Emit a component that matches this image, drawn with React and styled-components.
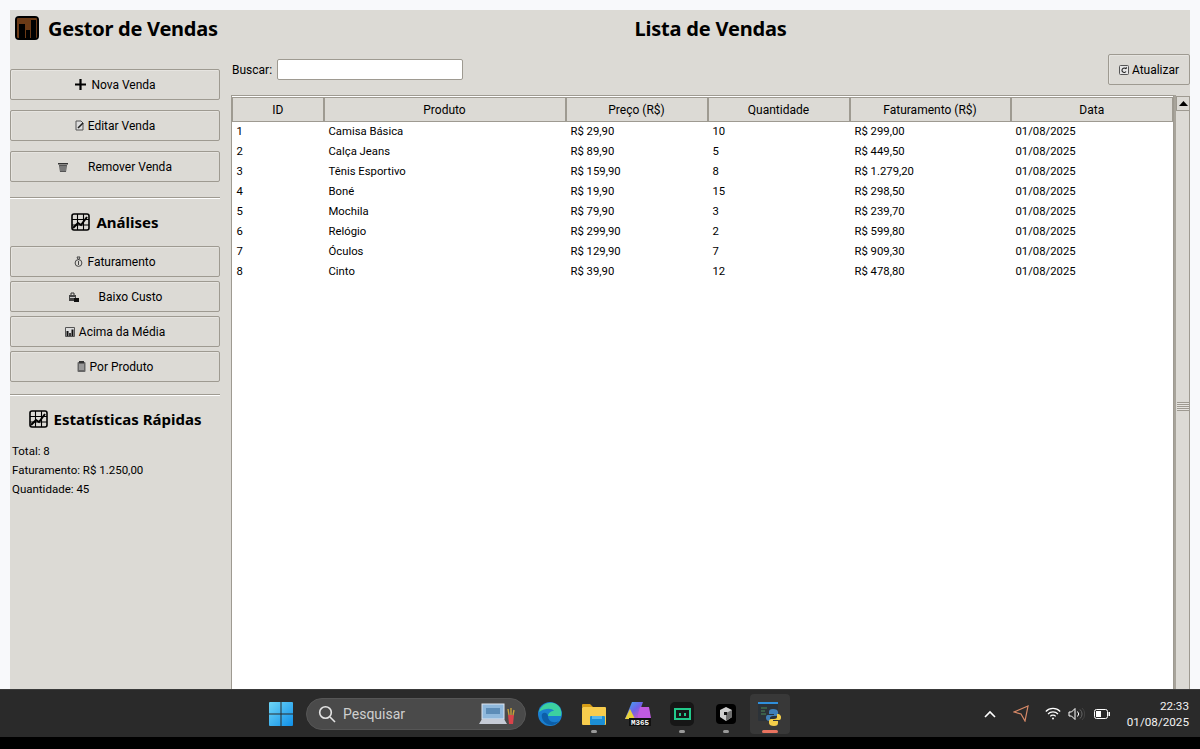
import React from 'react'
import styled, { createGlobalStyle } from 'styled-components'

const Global = createGlobalStyle`
  html, body { margin: 0; padding: 0; background: #f8f9fb; }
  body { font-family: Roboto, "Liberation Sans", sans-serif; font-size: 12px; color: #000; }
  * { box-sizing: border-box; }
`

const Page = styled.div`
  width: 1200px;
  height: 749px;
  overflow: hidden;
  padding-top: 10px;
  display: flex;
  flex-direction: column;
`
const Win = styled.div`
  margin: 0 10px;
  height: 679px;
  background: #dcdad5;
  display: flex;
  overflow: hidden;
`
const Sidebar = styled.aside`
  width: 210px;
  flex: none;
  display: flex;
  flex-direction: column;
`
const Brand = styled.div`
  height: 59px;
  padding: 6px 0 0 5px;
  display: flex;
  align-items: flex-start;
  gap: 9px;
  font-family: "Noto Sans", sans-serif;
  font-size: 20px;
  font-weight: 700;
  line-height: 26px;
  letter-spacing: -0.25px;
  white-space: nowrap;
`
const BtnStack = styled.div`
  display: flex;
  flex-direction: column;
  gap: ${p => p.$gap}px;
`
const Btn = styled.button`
  height: 31px;
  width: ${p => p.$w || '100%'};
  padding: 0;
  border: 1px solid #9e9a91;
  border-radius: 2px;
  background: #dcdad5;
  box-shadow: inset 1px 1px 0 #e6e4e0;
  font: inherit;
  color: #000;
  display: flex;
  align-items: center;
  justify-content: center;
  gap: ${p => p.$gap || 4}px;
`
const Rule = styled.hr`
  margin: ${p => p.$top}px 0 0;
  border: 0;
  height: 2px;
  background: linear-gradient(#9e9a91 50%, #fff 50%);
`
const Heading = styled.h2`
  margin: ${p => p.$mt || 0}px 0 0;
  height: ${p => p.$h}px;
  padding-bottom: 2px;
  display: flex;
  align-items: center;
  justify-content: center;
  gap: 6px;
  font-family: "Noto Sans", sans-serif;
  font-size: 15px;
  font-weight: 700;
`
const Stats = styled.div`
  padding-left: 2px;
  font-size: 11.5px;
  line-height: 19px;
`
const Main = styled.main`
  flex: 1;
  min-width: 0;
  margin-left: 11px;
  display: flex;
  flex-direction: column;
`
const Title = styled.h1`
  margin: 0;
  height: 44px;
  padding: 6px 0 0;
  text-align: center;
  font-family: "Noto Sans", sans-serif;
  font-size: 20px;
  font-weight: 700;
  line-height: 26px;
  letter-spacing: -0.2px;
`
const Toolbar = styled.div`
  height: 41px;
  display: flex;
  align-items: flex-start;
  padding-left: 1px;
`
const SearchLabel = styled.label`
  margin: 6px 5px 0 0;
  line-height: 20px;
`
const SearchInput = styled.input`
  width: 186px;
  height: 21px;
  margin-top: 5px;
  border: 1px solid #9e9a91;
  border-radius: 2px;
  background: #fff;
  outline: none;
`
const Spacer = styled.div`
  flex: 1;
`
const Body = styled.div`
  flex: 1;
  display: flex;
  min-height: 0;
`
const TableFrame = styled.div`
  width: 943px;
  flex: none;
  background: #fff;
  border: 1px solid #9e9a91;
  border-bottom: 0;
  padding-top: 1px;
`
const Table = styled.table`
  border-collapse: collapse;
  table-layout: fixed;
  width: 940px;
`
const Th = styled.th`
  width: ${p => p.$w}px;
  height: 24px;
  padding: 0;
  background: #dcdad5;
  border: 1px solid #9e9a91;
  border-left-width: ${p => (p.$first ? 1 : 2)}px;
  font-weight: 400;
  text-align: center;
`
const Td = styled.td`
  height: 20px;
  padding: 0 0 0 5px;
  font-size: 11.3px;
  white-space: nowrap;
  overflow: hidden;
  &:first-child {
    padding-left: 4px;
  }
`
const Scroll = styled.div`
  width: 16px;
  background: #dcdad5;
  border-left: 2px solid #a8a49b;
  display: flex;
  flex-direction: column;
`
const ScrollUp = styled.div`
  height: 15px;
  margin-top: 1px;
  background: #dcdad5;
  border: 1px solid #9e9a91;
  display: flex;
  align-items: center;
  justify-content: center;
`
const Thumb = styled.div`
  flex: 1;
  background: #dcdad5;
  border-right: 1px solid #9e9a91;
  display: flex;
  align-items: center;
  justify-content: center;
  padding-top: 12px;
`
const Grip = styled.div`
  width: 12px;
  height: 9px;
  background: repeating-linear-gradient(#9e9a91 0 1px, #e6e4e0 1px 2px);
`
const Taskbar = styled.footer`
  height: 48px;
  flex: none;
  background: #2a2a2a;
  border-top: 1px solid #3a3a3a;
  display: flex;
  align-items: center;
  padding: 0 11px 0 269px;
  color: #fff;
`
const Search = styled.div`
  width: 220px;
  height: 32px;
  margin-left: 13px;
  border-radius: 16px;
  background: #4a4a4a;
  border: 1px solid #565656;
  display: flex;
  align-items: center;
  padding: 0 10px 0 11px;
  color: #cfcfcf;
  font-size: 14px;
`
const SearchText = styled.span`
  margin-left: 7px;
  flex: 1;
`
const Apps = styled.div`
  display: flex;
  align-items: center;
  margin-left: 2px;
`
const AppSlot = styled.div`
  position: relative;
  width: 44px;
  height: 40px;
  display: flex;
  align-items: center;
  justify-content: center;
  &::before {
    content: '';
    display: ${p => (p.$active ? 'block' : 'none')};
    position: absolute;
    inset: 0 2px;
    border-radius: 4px;
    background: #383838;
  }
  & > svg {
    position: relative;
  }
  &::after {
    content: '';
    display: ${p => (p.$dot || p.$active ? 'block' : 'none')};
    position: absolute;
    bottom: 1px;
    left: 50%;
    width: ${p => (p.$active ? 16 : 6)}px;
    height: 3px;
    margin-left: ${p => (p.$active ? -8 : -3)}px;
    border-radius: 2px;
    background: ${p => (p.$active ? '#e8735f' : '#9a9a9a')};
  }
`
const Tray = styled.div`
  margin-left: auto;
  display: flex;
  align-items: center;
`
const TrayGap = styled.span`
  width: ${p => p.$w}px;
`
const Clock = styled.div`
  margin-left: 17px;
  text-align: right;
  font-size: 11.7px;
  line-height: 16px;
  color: #f2f2f2;
`
const BottomBlack = styled.div`
  flex: 1;
  background: #000;
`

const IconBars = () => (
  <svg width="24" height="24" viewBox="0 0 24 24">
    <rect x="0" y="0" width="24" height="24" rx="4" fill="#000" />
    <rect x="2" y="2" width="20" height="20" rx="1" fill="#6b3a16" />
    <rect x="4" y="8" width="6" height="14" fill="#000" />
    <rect x="11" y="14" width="4" height="8" fill="#000" />
    <rect x="16" y="4" width="5" height="18" fill="#000" />
  </svg>
)
const IconChart = () => (
  <svg width="19" height="18" viewBox="0 0 19 18" fill="none" stroke="#000">
    <rect x="1" y="1" width="17" height="16" rx="2" strokeWidth="1.6" />
    <path d="M1 6.5h17M1 12h17M6.5 1v16M12.5 1v16" strokeWidth="1.1" />
    <path d="M2 15l5-5 3 2 6-8" strokeWidth="2" />
  </svg>
)
const IconPlus = () => (
  <svg width="13" height="13" viewBox="0 0 13 13"><path d="M6.5 1v11M1 6.5h11" stroke="#000" strokeWidth="2.2" /></svg>
)
const IconEdit = () => (
  <svg width="10" height="11" viewBox="0 0 10 11" fill="none">
    <path d="M1 1h5l2 2v7H1z" stroke="#555" fill="#ddd" />
    <path d="M3 8l5-5" stroke="#222" strokeWidth="1.6" />
  </svg>
)
const IconTrash = () => (
  <svg width="10" height="10" viewBox="0 0 10 10">
    <path d="M0 1h10v1.5H0z" fill="#333" />
    <path d="M1 3h8l-1 7H2z" fill="#555" />
    <path d="M3 4v5M5 4v5M7 4v5" stroke="#bbb" strokeWidth=".7" />
  </svg>
)
const IconBag = () => (
  <svg width="9" height="11" viewBox="0 0 9 11" fill="none" stroke="#444">
    <circle cx="4.5" cy="7" r="3.4" />
    <path d="M3 1h3L5 3.4H4z" />
    <path d="M4.5 5v4" />
  </svg>
)
const IconTag = () => (
  <svg width="11" height="10" viewBox="0 0 11 10">
    <path d="M3 3V1h3v2" fill="none" stroke="#333" />
    <rect x="1" y="3" width="7" height="6" fill="#444" />
    <rect x="2" y="5" width="5" height="1" fill="#ccc" />
    <rect x="6" y="6" width="5" height="4" fill="#111" />
  </svg>
)
const IconMiniBars = () => (
  <svg width="10" height="10" viewBox="0 0 10 10">
    <rect width="10" height="10" rx="1" fill="#555" />
    <rect x="1" y="1" width="8" height="8" fill="#ddd" />
    <path d="M1.5 4h2v5h-2zM4.2 6h1.6v3H4.200zM6.500 2.500h2V9h-2z" fill="#111" />
  </svg>
)
const IconClip = () => (
  <svg width="9" height="11" viewBox="0 0 9 11">
    <rect x=".5" y="1" width="8" height="10" rx="1" fill="#666" />
    <rect x="2" y="0" width="5" height="2" fill="#333" />
    <path d="M2 4h5M2 6h5M2 8h5" stroke="#ccc" />
  </svg>
)
const IconRefresh = () => (
  <svg width="10" height="10" viewBox="0 0 10 10" fill="none">
    <rect x=".5" y=".5" width="9" height="9" rx="1" stroke="#555" fill="#e6e6e6" />
    <path d="M7 4a2.200 2.200 0 1 0 0 2.500" stroke="#222" strokeWidth="1.1" />
    <path d="M5.500 3.800h2.300V1.800z" fill="#222" />
  </svg>
)
const IconWin = () => (
  <svg width="24" height="24" viewBox="0 0 24 24">
    <defs>
      <linearGradient id="w" x1="0" y1="0" x2="1" y2="1">
        <stop offset="0" stopColor="#6fd6f7" />
        <stop offset="1" stopColor="#0f8fe8" />
      </linearGradient>
    </defs>
    <path d="M1 0h10.500v11.500H0V1a1 1 0 0 1 1-1zM12.500 0H23a1 1 0 0 1 1 1v10.500H12.500zM0 12.500h11.500V24H1a1 1 0 0 1-1-1zM12.500 12.500H24V23a1 1 0 0 1-1 1H12.500z" fill="url(#w)" />
  </svg>
)
const IconSearch = () => (
  <svg width="18" height="18" viewBox="0 0 18 18" fill="none" stroke="#e4e4e4" strokeWidth="1.6">
    <circle cx="7.500" cy="7.500" r="5.800" />
    <path d="M12 12l5 5" />
  </svg>
)
const IconLaptop = () => (
  <svg width="36" height="24" viewBox="0 0 36 24">
    <rect x="3" y="2" width="22" height="15" fill="#8fb8dc" stroke="#dfe6f0" />
    <rect x="7" y="6" width="14" height="6" fill="#5d8db8" />
    <path d="M3 17h22l3 5H0z" fill="#c6cbd6" />
    <path d="M29 13h6l-1 9h-4z" fill="#d9434a" />
    <path d="M30 13l-1-6M32 13v-7M34 13l1-5" stroke="#c9a13a" strokeWidth="1.4" />
  </svg>
)
const IconEdge = () => (
  <svg width="26" height="26" viewBox="0 0 26 26">
    <circle cx="13" cy="13" r="12" fill="#1a7fd0" />
    <path d="M2 11C4 3 13 0 19 3c5 3 6 8 5 12H11c0-3 3-5 6-5-2-3-9-3-15 1z" fill="#3cd0a0" />
    <path d="M11 15c0 5 5 8 11 5-3 4-8 5-12 3-4-2-6-7-5-10 2-2 5-2 6 2z" fill="#0c5ea8" />
  </svg>
)
const IconFolder = () => (
  <svg width="26" height="24" viewBox="0 0 26 24">
    <path d="M1 3a1 1 0 0 1 1-1h7l3 3H1z" fill="#d59c16" />
    <rect x="1" y="5" width="24" height="18" rx="1" fill="#f7cc4d" />
    <rect x="9" y="14" width="15" height="9" rx="1" fill="#1c8fd6" />
    <rect x="11" y="14" width="10" height="3" fill="#58b7ea" />
  </svg>
)
const IconM365 = () => (
  <svg width="26" height="24" viewBox="0 0 26 24">
    <defs>
      <linearGradient id="m" x1="0" y1="0" x2="1" y2="1">
        <stop offset="0" stopColor="#37b6f0" />
        <stop offset=".5" stopColor="#6e62e8" />
        <stop offset="1" stopColor="#e85bb4" />
      </linearGradient>
    </defs>
    <path d="M7 0h11l-6 17H0z" fill="url(#m)" />
    <path d="M0 17l5-10 5 10z" fill="#e7d33c" />
    <path d="M15 5h9l2 11H12z" fill="#c05ae0" />
    <rect x="4" y="16" width="22" height="8" fill="#111" />
    <text x="15" y="23" textAnchor="middle" fontSize="7.500" fontFamily="Liberation Mono, monospace" fontWeight="700" fill="#fff">M365</text>
  </svg>
)
const IconBot = () => (
  <svg width="24" height="24" viewBox="0 0 24 24">
    <rect width="24" height="24" rx="5" fill="#161616" />
    <path d="M5 7h15v10H9l-1 0H5z" fill="none" stroke="#22c98a" strokeWidth="2" />
    <rect x="9" y="11" width="2" height="3" fill="#22c98a" />
    <rect x="14" y="11" width="2" height="3" fill="#22c98a" />
  </svg>
)
const IconCube = () => (
  <svg width="20" height="20" viewBox="0 0 20 20">
    <rect width="20" height="20" rx="4" fill="#000" />
    <path d="M10 3l6 3v7l-6 4-6-4V6z" fill="#cfcfcf" />
    <path d="M10 9l6-3v7l-6 4z" fill="#6f6f6f" />
    <path d="M8 8h3v3H8z" fill="#111" />
  </svg>
)
const IconPython = () => (
  <svg width="24" height="24" viewBox="0 0 24 24">
    <rect x="0" y="0" width="20" height="19" rx="1" fill="#2c3238" />
    <rect x="0" y="0" width="20" height="2" fill="#2f8fdc" />
    <path d="M3 6h6M3 9h4M3 12h5" stroke="#4c8a58" />
    <path d="M15 7c-3 0-4 1-4 3v2h5v1h-6c-2 0-2 2-2 3s1 3 3 3h1v-3c0-1 1-2 3-2h3c1 0 2-1 2-2v-2c0-2-2-3-5-3z" fill="#3f7fb8" />
    <path d="M16 24c3 0 4-1 4-3v-2h-5v-1h6c2 0 2-2 2-3s-1-3-3-3h-1v3c0 1-1 2-3 2h-3c-1 0-2 1-2 2v2c0 2 2 3 5 3z" fill="#f2cd4a" />
  </svg>
)
const IconCaret = () => (
  <svg width="12" height="8" viewBox="0 0 12 8" fill="none" stroke="#fff" strokeWidth="1.6"><path d="M1 7l5-5 5 5" /></svg>
)
const IconNav = () => (
  <svg width="16" height="17" viewBox="0 0 16 17" fill="none" stroke="#d98a68" strokeWidth="1.2"><path d="M15 1L1 7l7 2 4 7z" /></svg>
)
const IconWifi = () => (
  <svg width="16" height="13" viewBox="0 0 16 13" fill="none" stroke="#fff" strokeWidth="1.2">
    <path d="M.8 4.500a10 10 0 0 1 14.400 0M3 7a7 7 0 0 1 10 0M5.300 9.300a3.500 3.500 0 0 1 5.400 0" />
    <circle cx="8" cy="11.500" r="1" fill="#fff" stroke="none" />
  </svg>
)
const IconVol = () => (
  <svg width="17" height="14" viewBox="0 0 17 14" fill="none" stroke="#fff">
    <path d="M1 5h2.500L7 1.500v11L3.500 9H1z" />
    <path d="M9.500 4.500a3.500 3.500 0 0 1 0 5" />
    <path d="M12 2.500a6 6 0 0 1 0 9" stroke="#666" />
    <path d="M14 1a8 8 0 0 1 0 12" stroke="#444" />
  </svg>
)
const IconBattery = () => (
  <svg width="16" height="10" viewBox="0 0 16 10" fill="none">
    <rect x=".5" y=".5" width="13" height="9" rx="2" stroke="#fff" />
    <rect x="2" y="2" width="5" height="6" fill="#fff" />
    <rect x="14.500" y="3" width="1.500" height="4" fill="#fff" />
  </svg>
)

const actions = [
  { icon: <IconPlus />, label: 'Nova Venda', gap: 4 },
  { icon: <IconEdit />, label: 'Editar Venda', gap: 3 },
  { icon: <IconTrash />, label: 'Remover Venda', gap: 20 },
]
const analyses = [
  { icon: <IconBag />, label: 'Faturamento', gap: 4 },
  { icon: <IconTag />, label: 'Baixo Custo', gap: 20 },
  { icon: <IconMiniBars />, label: 'Acima da Média', gap: 4 },
  { icon: <IconClip />, label: 'Por Produto', gap: 4 },
]
const columns = [
  { label: 'ID', w: 91 },
  { label: 'Produto', w: 242 },
  { label: 'Preço (R$)', w: 142 },
  { label: 'Quantidade', w: 142 },
  { label: 'Faturamento (R$)', w: 161 },
  { label: 'Data', w: 162 },
]
const rows = [
  [1, 'Camisa Básica', 'R$ 29,90', 10, 'R$ 299,00'],
  [2, 'Calça Jeans', 'R$ 89,90', 5, 'R$ 449,50'],
  [3, 'Tênis Esportivo', 'R$ 159,90', 8, 'R$ 1.279,20'],
  [4, 'Boné', 'R$ 19,90', 15, 'R$ 298,50'],
  [5, 'Mochila', 'R$ 79,90', 3, 'R$ 239,70'],
  [6, 'Relógio', 'R$ 299,90', 2, 'R$ 599,80'],
  [7, 'Óculos', 'R$ 129,90', 7, 'R$ 909,30'],
  [8, 'Cinto', 'R$ 39,90', 12, 'R$ 478,80'],
]

export default function App() {
  return (
    <Page>
      <Global />
      <Win>
        <Sidebar>
          <Brand><IconBars /><span>Gestor de Vendas</span></Brand>
          <BtnStack $gap={10}>
            {actions.map(a => <Btn key={a.label} $gap={a.gap}>{a.icon}{a.label}</Btn>)}
          </BtnStack>
          <Rule $top={15} />
          <Heading $h={47}><IconChart />Análises</Heading>
          <BtnStack $gap={4}>
            {analyses.map(a => <Btn key={a.label} $gap={a.gap}>{a.icon}{a.label}</Btn>)}
          </BtnStack>
          <Rule $top={12} />
          <Heading $h={44} $mt={2}><IconChart />Estatísticas Rápidas</Heading>
          <Stats>
            <div>Total: 8</div>
            <div>Faturamento: R$ 1.250,00</div>
            <div>Quantidade: 45</div>
          </Stats>
        </Sidebar>
        <Main>
          <Title>Lista de Vendas</Title>
          <Toolbar>
            <SearchLabel>Buscar:</SearchLabel>
            <SearchInput />
            <Spacer />
            <Btn $w="82px" $gap={3}><IconRefresh />Atualizar</Btn>
          </Toolbar>
          <Body>
            <TableFrame>
              <Table>
                <thead>
                  <tr>{columns.map((c, i) => <Th key={c.label} $w={c.w} $first={i === 0}>{c.label}</Th>)}</tr>
                </thead>
                <tbody>
                  {rows.map(r => (
                    <tr key={r[0]}>
                      {r.map((v, i) => <Td key={i}>{v}</Td>)}
                      <Td>01/08/2025</Td>
                    </tr>
                  ))}
                </tbody>
              </Table>
            </TableFrame>
            <Scroll>
              <ScrollUp>
                <svg width="9" height="5" viewBox="0 0 9 5"><path d="M4.500 0L9 5H0z" fill="#000" /></svg>
              </ScrollUp>
              <Thumb><Grip /></Thumb>
            </Scroll>
          </Body>
        </Main>
      </Win>
      <Taskbar>
        <IconWin />
        <Search>
          <IconSearch />
          <SearchText>Pesquisar</SearchText>
          <IconLaptop />
        </Search>
        <Apps>
          <AppSlot><IconEdge /></AppSlot>
          <AppSlot $dot><IconFolder /></AppSlot>
          <AppSlot><IconM365 /></AppSlot>
          <AppSlot $dot><IconBot /></AppSlot>
          <AppSlot $dot><IconCube /></AppSlot>
          <AppSlot $active><IconPython /></AppSlot>
        </Apps>
        <Tray>
          <IconCaret />
          <TrayGap $w={17} />
          <IconNav />
          <TrayGap $w={16} />
          <IconWifi />
          <TrayGap $w={7} />
          <IconVol />
          <TrayGap $w={9} />
          <IconBattery />
          <Clock>22:33<br />01/08/2025</Clock>
        </Tray>
      </Taskbar>
      <BottomBlack />
    </Page>
  )
}
